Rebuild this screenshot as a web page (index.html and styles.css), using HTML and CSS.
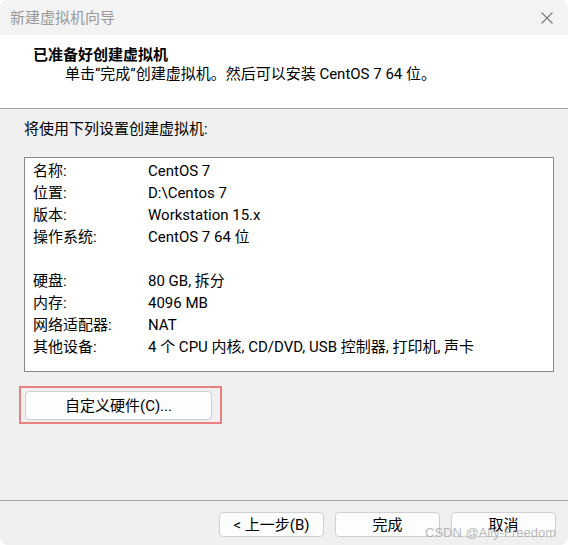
FILE: index.html
```html
<!DOCTYPE html>
<html lang="zh-CN">
<head>
<meta charset="utf-8">
<title>新建虚拟机向导</title>
<link rel="stylesheet" href="styles.css">
</head>
<body>
<div class="window">
  <div class="titlebar">
    <span class="title">新建虚拟机向导</span>
    <svg class="close" width="12" height="12" viewBox="0 0 12 12"><path d="M0.5 0.5 L11.5 11.5 M11.5 0.5 L0.5 11.5" stroke="#7a7a7a" stroke-width="1.1" fill="none"/></svg>
  </div>
  <div class="header">
    <div class="heading">已准备好创建虚拟机</div>
    <div class="subtitle">单击“完成”创建虚拟机。然后可以安装 CentOS 7 64 位。</div>
  </div>
  <div class="content">
    <div class="intro">将使用下列设置创建虚拟机:</div>
    <div class="summary">
      <div class="row"><span class="label">名称:</span><span class="value">CentOS 7</span></div>
      <div class="row"><span class="label">位置:</span><span class="value">D:\Centos 7</span></div>
      <div class="row"><span class="label">版本:</span><span class="value">Workstation 15.x</span></div>
      <div class="row"><span class="label">操作系统:</span><span class="value">CentOS 7 64 位</span></div>
      <div class="row"></div>
      <div class="row"><span class="label">硬盘:</span><span class="value">80 GB, 拆分</span></div>
      <div class="row"><span class="label">内存:</span><span class="value">4096 MB</span></div>
      <div class="row"><span class="label">网络适配器:</span><span class="value">NAT</span></div>
      <div class="row"><span class="label">其他设备:</span><span class="value">4 个 CPU 内核, CD/DVD, USB 控制器, 打印机, 声卡</span></div>
    </div>
    <div class="highlight">
      <button class="btn custom">自定义硬件(C)...</button>
    </div>
  </div>
  <div class="footer">
    <button class="btn">&lt; 上一步(B)</button>
    <button class="btn">完成</button>
    <button class="btn">取消</button>
  </div>
  <div class="watermark">CSDN @Ally-Freedom</div>
</div>
</body>
</html>
```
FILE: styles.css
```css
* { box-sizing: border-box; }
html, body { margin: 0; padding: 0; background: #ffffff; }
body {
  font-family: Roboto, "Noto Sans CJK SC", sans-serif;
  font-size: 15px;
  color: #000;
}
.window {
  position: relative;
  width: 568px;
  height: 545px;
  background: #f0f0f0;
  border-radius: 8px;
  overflow: hidden;
  display: flex;
  flex-direction: column;
}
.titlebar {
  height: 35px;
  flex: none;
  background: #f3f3f3;
  display: flex;
  align-items: center;
  justify-content: space-between;
  padding: 0 15px 0 10px;
}
.title {
  font-size: 15px;
  color: #9a9a9a;
  line-height: 20px;
}
.close { display: block; margin-top: 1px; }
.header {
  flex: none;
  height: 74px;
  background: #ffffff;
  border-bottom: 1px solid #a0a0a0;
  padding: 10px 0 0 33px;
}
.heading {
  font-weight: bold;
  line-height: 20px;
}
.subtitle {
  margin-top: -1px;
  padding-left: 32px;
  line-height: 20px;
}
.content {
  flex: 1;
  padding: 10px 14px 0 24px;
  display: flex;
  flex-direction: column;
  align-items: flex-start;
}
.intro {
  line-height: 20px;
}
.summary {
  margin-top: 18px;
  width: 530px;
  height: 215px;
  background: #ffffff;
  border: 1px solid #858a91;
  padding: 2px 0 0 8px;
}
.row {
  display: flex;
  height: 22px;
  line-height: 22px;
  white-space: nowrap;
}
.label { width: 115px; flex: none; }
.highlight {
  margin: 14px 0 0 -5px;
  width: 203px;
  height: 38px;
  border: 2px solid #e98181;
  padding: 3px 8px 2px 4px;
}
.btn {
  font-family: Roboto, "Noto Sans CJK SC", sans-serif;
  font-size: 15px;
  color: #000;
  background: #fdfdfd;
  border: 1px solid #d0d0d0;
  border-radius: 4px;
  padding: 0;
  width: 105px;
  height: 25px;
  line-height: 22px;
}
.btn.custom {
  width: 187px;
  height: 29px;
  line-height: 26px;
}
.footer {
  flex: none;
  height: 45px;
  border-top: 1px solid #a0a0a0;
  display: flex;
  justify-content: flex-end;
  align-items: flex-start;
  gap: 11px;
  padding: 11px 12px 0 0;
}
.watermark {
  position: absolute;
  right: 12px;
  bottom: 4px;
  font-family: "Liberation Sans", Arial, sans-serif;
  font-size: 13px;
  color: rgba(160, 160, 160, 0.75);
  line-height: 16px;
}
```
